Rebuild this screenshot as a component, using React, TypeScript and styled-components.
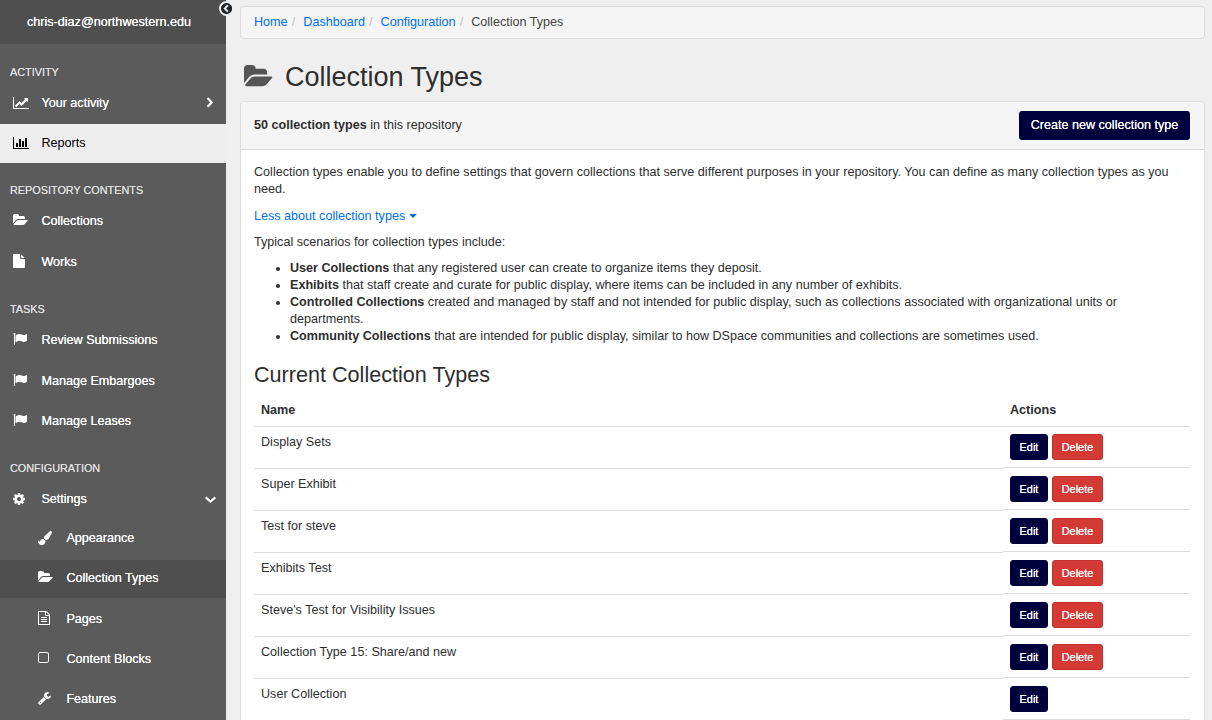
import React from 'react';
import styled, { createGlobalStyle } from 'styled-components';

const Global = createGlobalStyle`
  *, *::before, *::after { box-sizing: border-box; }
  html, body { margin: 0; height: 720px; overflow: hidden; }
  body { background: #efefef; color: #2e2e2e; font: 12.6px/17px "Liberation Sans", Arial, sans-serif; }
`;

const Page = styled.div`
  display: flex;
  height: 720px;
  overflow: hidden;
`;

const Sidebar = styled.aside`
  position: relative;
  flex: 0 0 226px;
  background: #5b5b5b;
  color: #fff;
`;

const User = styled.div`
  height: 44px;
  padding: 14px 0 0 27px;
  background: #4f4f4f;
  text-shadow: 0 0 0.4px #fff;
  white-space: nowrap;
`;

const Collapse = styled.button`
  position: absolute;
  left: 219px;
  top: 1px;
  width: 15px;
  height: 15px;
  padding: 0;
  border: 0;
  border-radius: 50%;
  display: grid;
  place-items: center;
  background: #efefef;
  color: #1f2429;
`;

const SectionTitle = styled.h2<{ $height: number }>`
  height: ${(p) => p.$height}px;
  margin: 0;
  padding: 0 0 3px 10px;
  display: flex;
  align-items: flex-end;
  color: #dedede;
  font-size: 10.85px;
  font-weight: 400;
  text-shadow: 0 0 0.4px #dedede;
  white-space: nowrap;
`;

const Item = styled.a<{ $nested?: boolean; $state?: 'light' | 'dark' }>`
  height: ${(p) => (p.$state === 'dark' ? 38 : 39)}px;
  padding: 0 10px ${(p) => (p.$state === 'dark' ? 4 : 3)}px ${(p) => (p.$nested ? 38 : 13)}px;
  display: flex;
  align-items: center;
  background: ${(p) => (p.$state === 'light' ? '#eeeeee' : p.$state === 'dark' ? '#4f4f4f' : 'transparent')};
  color: ${(p) => (p.$state === 'light' ? '#000' : '#fff')};
  text-shadow: ${(p) => (p.$state === 'light' ? 'none' : '0 0 0.4px #fff')};
  white-space: nowrap;
`;

const Gap = styled.div<{ $h: number }>`
  height: ${(p) => p.$h}px;
`;

const IconSlot = styled.span<{ $low?: boolean }>`
  flex: 0 0 28.4px;
  display: flex;
  padding-top: ${(p) => (p.$low ? 2 : 0)}px;
`;

const Glyph = styled.svg`
  display: block;
  fill: currentColor;
`;

const Label = styled.span`
  flex: 1;
  padding-top: 3px;
`;

const Main = styled.main`
  flex: 1;
  min-width: 0;
  padding: 6px 7px 0 14px;
`;

const Breadcrumb = styled.nav`
  height: 33px;
  padding: 0 13px;
  display: flex;
  align-items: center;
  background: #f5f5f5;
  border: 1px solid #dddddd;
  border-radius: 4px;
`;

const Link = styled.a`
  color: #0070ee;
`;

const Current = styled.span`
  color: #444;
`;

const Slash = styled.span`
  width: 15.7px;
  padding-left: 4.2px;
  color: #c4c4c4;
`;

const Title = styled.h1`
  height: 62px;
  margin: 0;
  padding: 14px 0 0 4px;
  display: flex;
  align-items: center;
  gap: 12px;
  font-size: 27px;
  line-height: 30px;
  font-weight: 400;
  svg { color: #555; margin-bottom: 1px; }
`;

const Panel = styled.section`
  height: 640px;
  background: #fff;
  border: 1px solid #dddddd;
  border-radius: 4px;
  overflow: hidden;
`;

const PanelHead = styled.header`
  height: 48px;
  padding: 0 14px 0 13px;
  display: flex;
  align-items: center;
  justify-content: space-between;
  background: #f5f5f5;
  border-bottom: 1px solid #dddddd;
`;

const CreateButton = styled.button`
  width: 171px;
  height: 29px;
  padding: 0;
  border: 0;
  border-radius: 3px;
  background: #00003c;
  color: #fff;
  font: inherit;
  text-shadow: 0 0 0.4px #fff;
  white-space: nowrap;
`;

const Body = styled.div`
  padding: 14px 14px 0 13px;
`;

const Para = styled.p<{ $after?: number }>`
  margin: 0 0 ${(p) => p.$after ?? 9}px;
`;

const Caret = styled.span`
  display: inline-block;
  margin-left: 0.5px;
  border: 4px solid transparent;
  border-top-color: currentColor;
  border-bottom: 0;
  border-radius: 1px;
  vertical-align: 2px;
`;

const List = styled.ul`
  margin: 0;
  padding: 0 0 0 36px;
`;

const SubTitle = styled.h3`
  margin: 18px 0 5px;
  font-size: 21.6px;
  line-height: 24px;
  font-weight: 400;
`;

const Row = styled.div`
  height: 42px;
  display: grid;
  grid-template-columns: 749px 187px;
  align-items: start;
`;

const HeadRow = styled(Row)`
  height: 35px;
  padding-top: 10px;
  border-bottom: 1px solid #dddddd;
  font-weight: 700;
  span { padding-left: 7px; }
`;

const NameCell = styled.div`
  height: 42px;
  padding: 7px 7px 0;
  border-bottom: 1px solid #dddddd;
`;

const ActionCell = styled.div`
  height: 41px;
  padding: 7px 7px 0;
  display: flex;
  gap: 4px;
  border-bottom: 1px solid #dddddd;
`;

const SmallButton = styled.button<{ $danger?: boolean }>`
  width: ${(p) => (p.$danger ? 51 : 38)}px;
  height: 26px;
  padding: 0;
  border: 1px solid ${(p) => (p.$danger ? '#c32f2b' : '#00003c')};
  border-radius: 3px;
  background: ${(p) => (p.$danger ? '#d33a35' : '#00003c')};
  color: #fff;
  font: 10.9px/16px "Liberation Sans", Arial, sans-serif;
  text-shadow: 0 0 0.4px #fff;
`;

const glyphs = {
  line: ['0 0 2048 1792', 'M2048 1536v128h-2048v-1536h128v1408h1920zm-128-1248v435q0 21-19.5 29.5t-35.5-7.5l-121-121-633 633q-10 10-23 10t-23-10l-233-233-416 416-192-192 585-585q10-10 23-10t23 10l233 233 464-464-121-121q-16-16-7.5-35.5t29.5-19.5h435q14 0 23 9t9 23z'],
  bars: ['0 0 2048 1792', 'M640 896v512h-256v-512h256zm384-512v1024h-256v-1024h256zm1024 1152v128h-2048v-1536h128v1408h1920zm-640-896v768h-256v-768h256zm384-384v1152h-256v-1152h256z'],
  folder: ['64 0 1920 1792', 'M1943 952q0 31-31 66l-336 396q-43 51-120.5 86.5t-143.5 35.5h-1088q-34 0-60.5-13t-26.5-43q0-31 31-66l336-396q43-51 120.5-86.5t143.5-35.5h1088q34 0 60.5 13t26.5 43zm-343-344v160h-832q-94 0-197 47.5t-164 119.5l-337 396-5 6q0-4-.5-12.5t-.5-12.5v-960q0-92 66-158t158-66h320q92 0 158 66t66 158v32h544q92 0 158 66t66 158z'],
  file: ['128 0 1536 1792', 'M1152 512v-472q22 14 36 28l408 408q14 14 28 36h-472zm-128 32q0 40 28 68t68 28h544v1056q0 40-28 68t-68 28h-1344q-40 0-68-28t-28-68v-1600q0-40 28-68t68-28h800v544z'],
  flag: ['0 0 1792 1792', 'M320 256q0 72-64 110v1266q0 13-9.5 22.5t-22.5 9.5h-64q-13 0-22.5-9.5t-9.5-22.5v-1266q-64-38-64-110 0-53 37.5-90.5t90.5-37.5 90.5 37.5 37.5 90.5zm1472 64v763q0 25-12.5 38.5t-39.5 27.5q-215 116-369 116-61 0-123.5-22t-108.5-48-115.5-48-142.5-22q-192 0-464 146-17 9-33 9-26 0-45-19t-19-45v-742q0-32 31-55 21-14 79-43 236-120 421-120 107 0 200 29t219 88q38 19 88 19 54 0 117.5-21t110-47 88-47 54.5-21q26 0 45 19t19 45z'],
  cog: ['128 0 1536 1792', 'M1152 896q0-106-75-181t-181-75-181 75-75 181 75 181 181 75 181-75 75-181zm512-109v222q0 12-8 23t-20 13l-185 28q-19 54-39 91 35 50 107 138 10 12 10 25t-9 23q-27 37-99 108t-94 71q-12 0-26-9l-138-108q-44 23-91 38-16 136-29 186-7 28-36 28h-222q-14 0-24.5-8.5t-11.5-21.5l-28-184q-49-16-90-37l-141 107q-10 9-25 9-14 0-25-11-126-114-165-168-7-10-7-23 0-12 8-23 15-21 51-66.5t54-70.5q-27-50-41-99l-183-27q-13-2-21-12.5t-8-23.5v-222q0-12 8-23t19-13l186-28q14-46 39-92-40-57-107-138-10-12-10-24 0-10 9-23 26-36 98.5-107.5t94.5-71.5q13 0 26 10l138 107q44-23 91-38 16-136 29-186 7-28 36-28h222q14 0 24.5 8.5t11.5 21.5l28 184q49 16 90 37l142-107q9-9 24-9 13 0 25 10 129 119 165 170 7 8 7 22 0 12-8 23-15 21-51 66.5t-54 70.5q26 50 41 98l183 28q13 2 21 12.5t8 23.5z'],
  brush: ['0 0 1792 1792', 'M1615 0q70 0 122.5 46.5t52.5 116.5q0 63-45 151-332 629-465 752-97 91-218 91-126 0-216.5-92.5t-90.5-219.5q0-128 92-212l638-579q59-54 130-54zm-909 1034q39 76 106.5 130t150.5 76l1 71q4 213-129.5 347t-348.5 134q-123 0-218-46.5t-152.5-127.5-86.5-183-29-220q7 5 41 30t62 44.5 59 36.5 46 17q41 0 55-37 25-66 57.5-112.5t69.5-76 88-47.5 103-25.5 125-10.5z'],
  page: ['128 0 1536 1792', 'M1596 380q28 28 48 76t20 88v1152q0 40-28 68t-68 28h-1344q-40 0-68-28t-28-68v-1600q0-40 28-68t68-28h896q40 0 88 20t76 48zm-444-244v376h376q-10-29-22-41l-313-313q-12-12-41-22zm384 1528v-1024h-416q-40 0-68-28t-28-68v-416h-768v1536h1280zm-1024-864q0-14 9-23t23-9h704q14 0 23 9t9 23v64q0 14-9 23t-23 9h-704q-14 0-23-9t-9-23v-64zm736 224q14 0 23 9t9 23v64q0 14-9 23t-23 9h-704q-14 0-23-9t-9-23v-64q0-14 9-23t23-9h704zm0 256q14 0 23 9t9 23v64q0 14-9 23t-23 9h-704q-14 0-23-9t-9-23v-64q0-14 9-23t23-9h704z'],
  square: ['192 0 1408 1792', 'M1312 256h-832q-66 0-113 47t-47 113v832q0 66 47 113t113 47h832q66 0 113-47t47-113v-832q0-66-47-113t-113-47zm288 160v832q0 119-84.5 203.5t-203.5 84.5h-832q-119 0-203.5-84.5t-84.5-203.5v-832q0-119 84.5-203.5t203.5-84.5h832q119 0 203.5 84.5t84.5 203.5z'],
  wrench: ['64 0 1664 1792', 'M448 1472q0-26-19-45t-45-19-45 19-19 45 19 45 45 19 45-19 19-45zm644-420l-682 682q-37 37-90 37-52 0-91-37l-106-108q-38-36-38-90 0-53 38-91l681-681q39 98 114.5 173.5t173.5 114.5zm634-435q0 39-23 106-47 134-164.5 217.5t-258.5 83.5q-185 0-316.5-131.5t-131.5-316.5 131.5-316.5 316.5-131.5q58 0 121.5 16.5t107.5 46.5q16 11 16 28t-16 28l-293 169v224l193 107q5-3 79-48.5t135.5-81 70.5-35.5q15 0 23.5 10t8.5 25z'],
  circleLeft: ['128 0 1536 1792', 'M1037 1395l102-102q19-19 19-45t-19-45l-307-307 307-307q19-19 19-45t-19-45l-102-102q-19-19-45-19t-45 19l-454 454q-19 19-19 45t19 45l454 454q19 19 45 19t45-19zm627-499q0 209-103 385.5t-279.5 279.5-385.5 103-385.5-103-279.5-279.5-103-385.5 103-385.5 279.5-279.5 385.5-103 385.5 103 279.5 279.5 103 385.5z'],
} as const;

type GlyphName = keyof typeof glyphs;

function Icon({ name, size = 14 }: { name: GlyphName; size?: number }) {
  const [box, d] = glyphs[name];
  const width = (Number(box.split(' ')[2]) / 1792) * size;
  return (
    <Glyph viewBox={box} width={width} height={size} aria-hidden>
      <path d={d} />
    </Glyph>
  );
}

function Chevron({ down }: { down?: boolean }) {
  return (
    <svg width="12" height="12" viewBox="0 0 12 12" fill="none" stroke="currentColor" strokeWidth="2.2" aria-hidden>
      <path d={down ? 'M1.7 5.4 6.5 9.6l4.8-4.2' : 'M3.5 2 7.7 6.4l-4.2 4.4'} />
    </svg>
  );
}

type Entry = {
  icon: GlyphName;
  label: string;
  nested?: boolean;
  state?: 'light' | 'dark';
  chevron?: 'right' | 'down';
  gap?: number;
  low?: boolean;
};

const sections: { title: string; height: number; items: Entry[] }[] = [
  {
    title: 'ACTIVITY', height: 40, items: [
      { icon: 'line', label: 'Your activity', chevron: 'right', low: true, gap: 1 },
      { icon: 'bars', label: 'Reports', state: 'light', low: true },
    ],
  },
  {
    title: 'REPOSITORY CONTENTS', height: 39, items: [
      { icon: 'folder', label: 'Collections', gap: 2 },
      { icon: 'file', label: 'Works' },
    ],
  },
  {
    title: 'TASKS', height: 39, items: [
      { icon: 'flag', label: 'Review Submissions', gap: 2 },
      { icon: 'flag', label: 'Manage Embargoes', gap: 1 },
      { icon: 'flag', label: 'Manage Leases' },
    ],
  },
  {
    title: 'CONFIGURATION', height: 39, items: [
      { icon: 'cog', label: 'Settings', chevron: 'down', low: true },
      { icon: 'brush', label: 'Appearance', nested: true, low: true, gap: 2 },
      { icon: 'folder', label: 'Collection Types', nested: true, state: 'dark', gap: 2 },
      { icon: 'page', label: 'Pages', nested: true, gap: 1 },
      { icon: 'square', label: 'Content Blocks', nested: true, gap: 1 },
      { icon: 'wrench', label: 'Features', nested: true },
    ],
  },
];

const types = [
  'Display Sets',
  'Super Exhibit',
  'Test for steve',
  'Exhibits Test',
  "Steve's Test for Visibility Issues",
  'Collection Type 15: Share/and new',
  'User Collection',
];

export default function App() {
  return (
    <>
      <Global />
      <Page>
        <Sidebar>
          <User>chris-diaz@northwestern.edu</User>
          {sections.map((s) => (
            <React.Fragment key={s.title}>
              <SectionTitle $height={s.height}>{s.title}</SectionTitle>
              {s.items.map((it) => (
                <React.Fragment key={it.label}>
                  <Item $nested={it.nested} $state={it.state}>
                    <IconSlot $low={it.low}><Icon name={it.icon} /></IconSlot>
                    <Label>{it.label}</Label>
                    {it.chevron && <Chevron down={it.chevron === 'down'} />}
                  </Item>
                  <Gap $h={it.gap ?? 0} />
                </React.Fragment>
              ))}
            </React.Fragment>
          ))}
          <Collapse aria-label="Collapse menu"><Icon name="circleLeft" size={13} /></Collapse>
        </Sidebar>
        <Main>
          <Breadcrumb>
            <Link>Home</Link><Slash>/</Slash>
            <Link>Dashboard</Link><Slash>/</Slash>
            <Link>Configuration</Link><Slash>/</Slash>
            <Current>Collection Types</Current>
          </Breadcrumb>
          <Title><Icon name="folder" size={27} />Collection Types</Title>
          <Panel>
            <PanelHead>
              <span><b>50 collection types</b> in this repository</span>
              <CreateButton>Create new collection type</CreateButton>
            </PanelHead>
            <Body>
              <Para $after={10}>
                Collection types enable you to define settings that govern collections that serve different purposes in
                your repository. You can define as many collection types as you need.
              </Para>
              <Para><Link>Less about collection types <Caret /></Link></Para>
              <Para>Typical scenarios for collection types include:</Para>
              <List>
                <li><b>User Collections</b> that any registered user can create to organize items they deposit.</li>
                <li><b>Exhibits</b> that staff create and curate for public display, where items can be included in any number of exhibits.</li>
                <li><b>Controlled Collections</b> created and managed by staff and not intended for public display, such as collections associated with organizational units or departments.</li>
                <li><b>Community Collections</b> that are intended for public display, similar to how DSpace communities and collections are sometimes used.</li>
              </List>
              <SubTitle>Current Collection Types</SubTitle>
              <HeadRow><span>Name</span><span>Actions</span></HeadRow>
              {types.map((t) => (
                <Row key={t}>
                  <NameCell>{t}</NameCell>
                  <ActionCell>
                    <SmallButton>Edit</SmallButton>
                    {t !== 'User Collection' && <SmallButton $danger>Delete</SmallButton>}
                  </ActionCell>
                </Row>
              ))}
            </Body>
          </Panel>
        </Main>
      </Page>
    </>
  );
}
